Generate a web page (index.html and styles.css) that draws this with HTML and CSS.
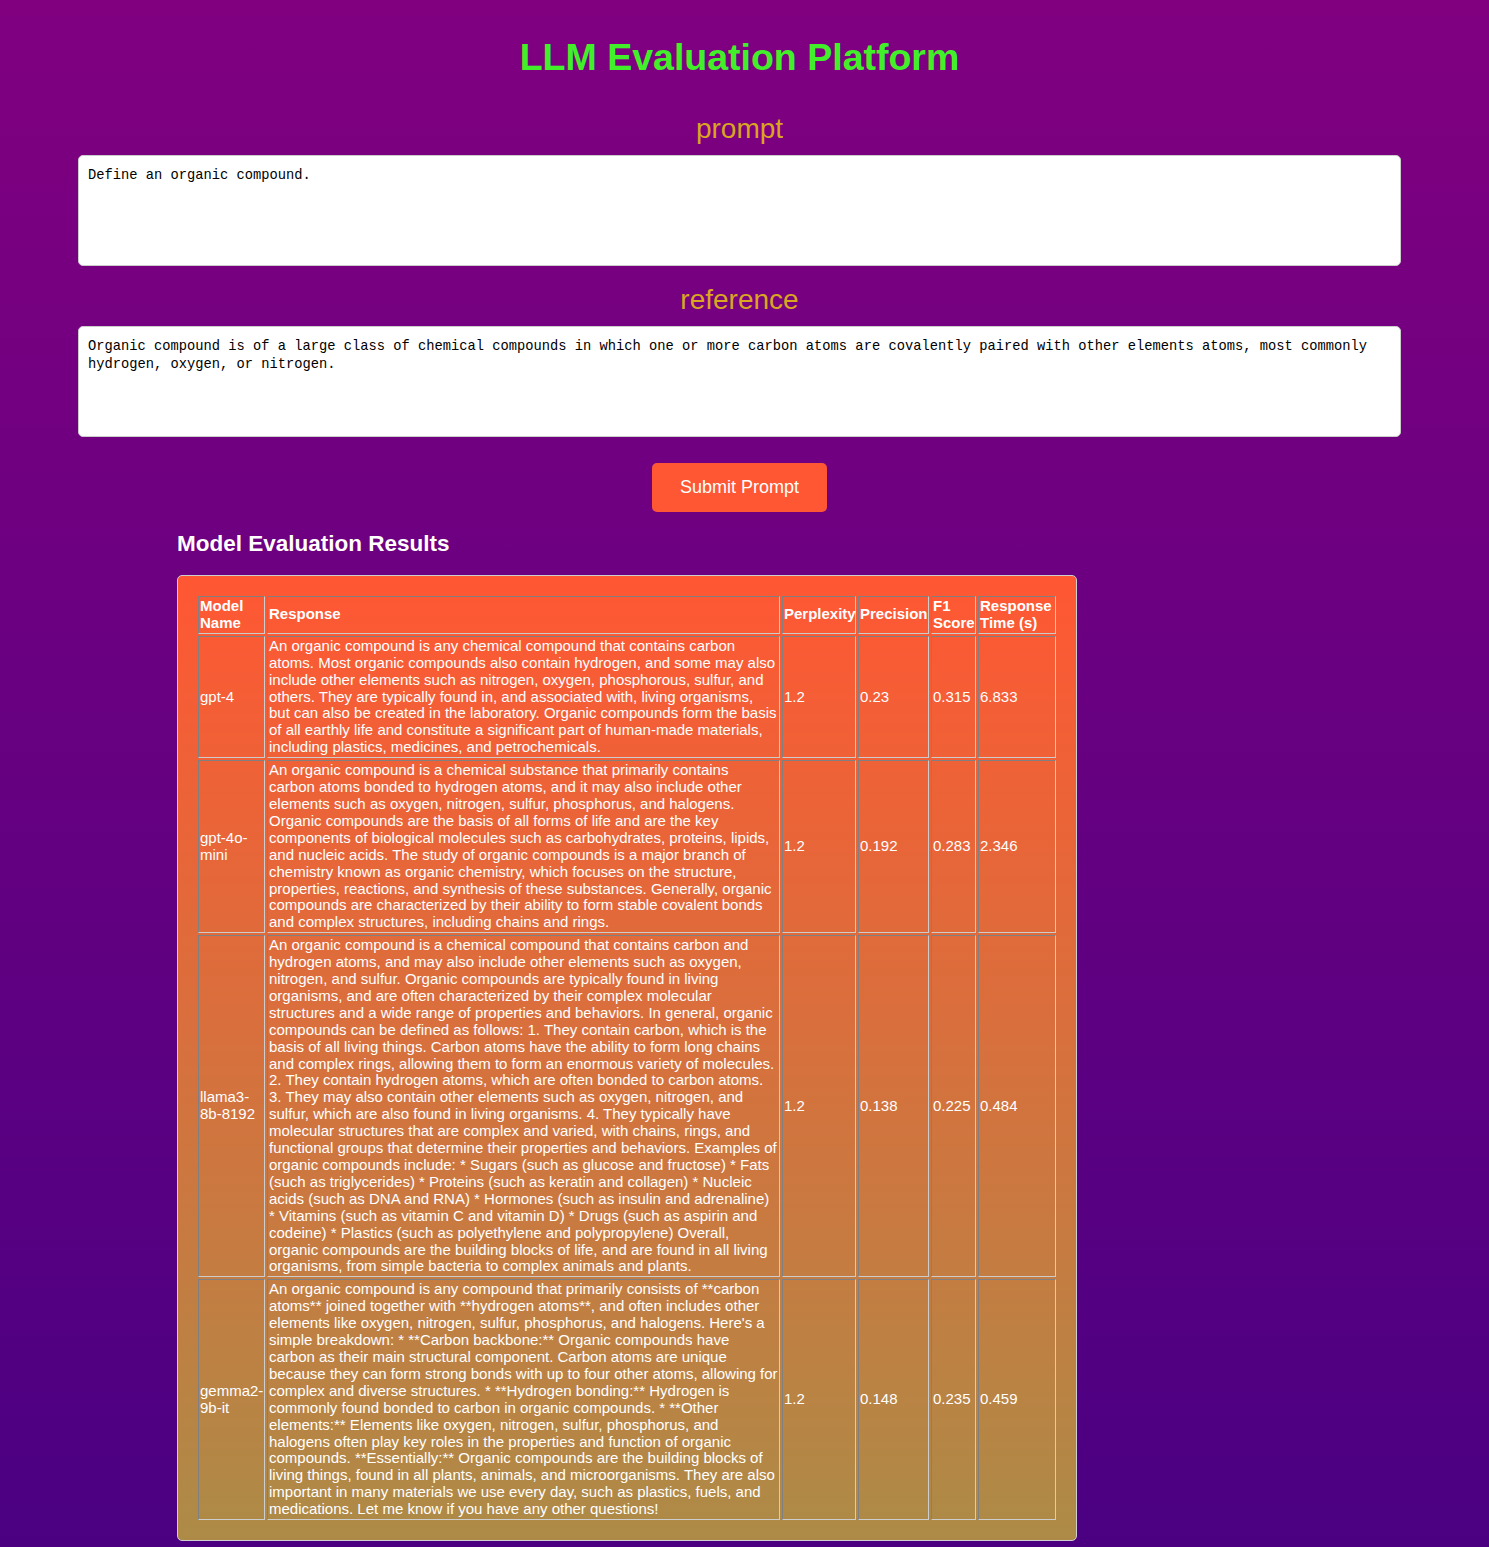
FILE: index.html
```html
<!DOCTYPE html>
<html lang="en">
<head>
<meta charset="utf-8">
<title>LLM Evaluation Platform</title>
<link rel="stylesheet" href="styles.css">
</head>
<body>
<div class="page">
  <h1 class="title">LLM Evaluation Platform</h1>

  <div class="field-label">prompt</div>
  <textarea class="field" readonly>Define an organic compound.</textarea>

  <div class="field-label">reference</div>
  <textarea class="field" readonly>Organic compound is of a large class of chemical compounds in which one or more carbon atoms are covalently paired with other elements atoms, most commonly hydrogen, oxygen, or nitrogen.</textarea>

  <div class="actions">
    <button class="submit-btn" type="button">Submit Prompt</button>
  </div>

  <section class="results">
    <h2 class="results-title">Model Evaluation Results</h2>
    <div class="results-box">
      <table class="results-table">
        <thead>
          <tr>
            <th class="col-model">Model Name</th>
            <th class="col-response">Response</th>
            <th class="col-perplexity">Perplexity</th>
            <th class="col-precision">Precision</th>
            <th class="col-f1">F1 Score</th>
            <th class="col-time">Response Time (s)</th>
          </tr>
        </thead>
        <tbody>
          <tr>
            <td>gpt-4</td>
            <td>An organic compound is any chemical compound that contains carbon atoms. Most organic compounds also contain hydrogen, and some may also include other elements such as nitrogen, oxygen, phosphorous, sulfur, and others. They are typically found in, and associated with, living organisms, but can also be created in the laboratory. Organic compounds form the basis of all earthly life and constitute a significant part of human-made materials, including plastics, medicines, and petrochemicals.</td>
            <td>1.2</td>
            <td>0.23</td>
            <td>0.315</td>
            <td>6.833</td>
          </tr>
          <tr>
            <td>gpt-4o-mini</td>
            <td>An organic compound is a chemical substance that primarily contains carbon atoms bonded to hydrogen atoms, and it may also include other elements such as oxygen, nitrogen, sulfur, phosphorus, and halogens. Organic compounds are the basis of all forms of life and are the key components of biological molecules such as carbohydrates, proteins, lipids, and nucleic acids. The study of organic compounds is a major branch of chemistry known as organic chemistry, which focuses on the structure, properties, reactions, and synthesis of these substances. Generally, organic compounds are characterized by their ability to form stable covalent bonds and complex structures, including chains and rings.</td>
            <td>1.2</td>
            <td>0.192</td>
            <td>0.283</td>
            <td>2.346</td>
          </tr>
          <tr>
            <td>llama3-8b-8192</td>
            <td>An organic compound is a chemical compound that contains carbon and hydrogen atoms, and may also include other elements such as oxygen, nitrogen, and sulfur. Organic compounds are typically found in living organisms, and are often characterized by their complex molecular structures and a wide range of properties and behaviors. In general, organic compounds can be defined as follows: 1. They contain carbon, which is the basis of all living things. Carbon atoms have the ability to form long chains and complex rings, allowing them to form an enormous variety of molecules. 2. They contain hydrogen atoms, which are often bonded to carbon atoms. 3. They may also contain other elements such as oxygen, nitrogen, and sulfur, which are also found in living organisms. 4. They typically have molecular structures that are complex and varied, with chains, rings, and functional groups that determine their properties and behaviors. Examples of organic compounds include: * Sugars (such as glucose and fructose) * Fats (such as triglycerides) * Proteins (such as keratin and collagen) * Nucleic acids (such as DNA and RNA) * Hormones (such as insulin and adrenaline) * Vitamins (such as vitamin C and vitamin D) * Drugs (such as aspirin and codeine) * Plastics (such as polyethylene and polypropylene) Overall, organic compounds are the building blocks of life, and are found in all living organisms, from simple bacteria to complex animals and plants.</td>
            <td>1.2</td>
            <td>0.138</td>
            <td>0.225</td>
            <td>0.484</td>
          </tr>
          <tr>
            <td>gemma2-9b-it</td>
            <td>An organic compound is any compound that primarily consists of **carbon atoms** joined together with **hydrogen atoms**, and often includes other elements like oxygen, nitrogen, sulfur, phosphorus, and halogens. Here's a simple breakdown: * **Carbon backbone:** Organic compounds have carbon as their main structural component. Carbon atoms are unique because they can form strong bonds with up to four other atoms, allowing for complex and diverse structures. * **Hydrogen bonding:** Hydrogen is commonly found bonded to carbon in organic compounds. * **Other elements:** Elements like oxygen, nitrogen, sulfur, phosphorus, and halogens often play key roles in the properties and function of organic compounds. **Essentially:** Organic compounds are the building blocks of living things, found in all plants, animals, and microorganisms. They are also important in many materials we use every day, such as plastics, fuels, and medications. Let me know if you have any other questions!</td>
            <td>1.2</td>
            <td>0.148</td>
            <td>0.235</td>
            <td>0.459</td>
          </tr>
        </tbody>
      </table>
    </div>
  </section>
</div>
</body>
</html>
```

FILE: styles.css
```css
html {
  background: #4b0082;
}

body {
  margin: 0;
  min-height: 1547px;
  font-family: "Liberation Sans", Arial, sans-serif;
  font-size: 15px;
  color: #ffffff;
  background: linear-gradient(to bottom, #800080 0%, #4b0082 100%);
}

.page {
  margin: 0 18px 0 8px;
  padding-top: 36px;
  padding-bottom: 7px;
}

.title {
  margin: 0 0 34px;
  font-size: 37.5px;
  line-height: 43px;
  font-weight: bold;
  text-align: center;
  color: #42f02a;
}

.field-label {
  margin: 18px 0 10px;
  font-size: 28px;
  line-height: 32px;
  text-align: center;
  color: #daa520;
}

.title + .field-label {
  margin-top: 33px;
}

.field {
  display: block;
  box-sizing: border-box;
  width: 1323px;
  height: 111px;
  margin: 0 auto;
  padding: 11px 10px 9px 9px;
  border: 1px solid #cccccc;
  border-radius: 5px;
  background: #ffffff;
  color: #000000;
  font-family: "Liberation Mono", "DejaVu Sans Mono", monospace;
  font-size: 13.75px;
  line-height: 18px;
  resize: none;
  outline: none;
}

.actions {
  display: flex;
  justify-content: center;
  margin-top: 26px;
}

.submit-btn {
  padding: 14px 28px;
  border: none;
  border-radius: 5px;
  background: #ff5733;
  color: #ffffff;
  font-family: "Liberation Sans", Arial, sans-serif;
  font-size: 18px;
  line-height: 21px;
  cursor: pointer;
}

.results {
  width: 900px;
  margin-left: 169px;
}

.results-title {
  margin: 19px 0 18px;
  font-size: 22.5px;
  line-height: 26px;
  font-weight: bold;
  color: #ffffff;
}

.results-box {
  padding: 18px;
  border: 1px solid #cfcfcf;
  border-radius: 5px;
  background: linear-gradient(to bottom, #ff5733 0%, #ad8b47 100%);
}

.results-table {
  width: 100%;
  table-layout: fixed;
  border-collapse: separate;
  border-spacing: 2px;
  font-size: 15px;
  line-height: 16.9px;
  color: #ffffff;
}

.results-table th,
.results-table td {
  box-sizing: border-box;
  padding: 1px;
  border: 1px solid;
  border-color: #808080 #cdcdcd #cdcdcd #808080;
  vertical-align: middle;
  text-align: left;
}

.results-table th {
  font-weight: bold;
}

.col-model { width: 67px; }
.col-response { width: auto; }
.col-perplexity { width: 74px; }
.col-precision { width: 71px; }
.col-f1 { width: 45px; }
.col-time { width: 78px; }
```
